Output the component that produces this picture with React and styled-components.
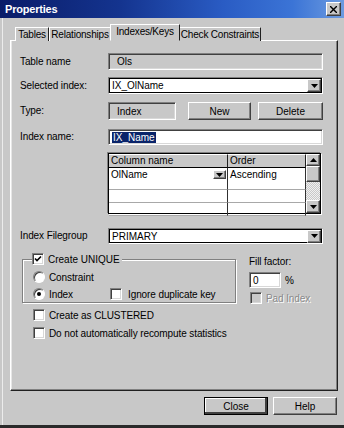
import React from "react";
import styled, { createGlobalStyle, css } from "styled-components";

const GlobalStyle = createGlobalStyle`
  html, body {
    margin: 0;
    padding: 0;
    background: #c8c8c8;
  }
  body {
    font-family: "Liberation Sans", Arial, sans-serif;
    font-size: 10px;
    color: #000;
  }
`;

const raised = css`
  border-top: 1px solid #fff;
  border-left: 1px solid #fff;
  border-right: 1px solid #404040;
  border-bottom: 1px solid #404040;
  box-shadow: inset -1px -1px 0 #808080;
`;

const sunken = css`
  border-top: 1px solid #808080;
  border-left: 1px solid #808080;
  border-right: 1px solid #fff;
  border-bottom: 1px solid #fff;
  box-shadow: inset 1px 1px 0 #404040, inset -1px -1px 0 #d8d8d8;
`;

const Window = styled.div`
  width: 344px;
  height: 428px;
  box-sizing: border-box;
  background: #c8c8c8;
  border-bottom: 3px solid #2a2a2a;
  display: flex;
  flex-direction: column;
  box-shadow: inset 2px 0 0 #c8c8c8, inset 3px 0 0 #ececec;
`;

const TitleBar = styled.div`
  height: 18px;
  background: linear-gradient(90deg, #0a1c68 0%, #14348f 35%, #2a5cc4 65%, #3b74d6 85%, #6c9be0 100%);
  display: flex;
  align-items: center;
  justify-content: space-between;
  padding: 0 3px 0 5px;
`;

const Title = styled.span`
  color: #fff;
  font-weight: bold;
  font-size: 11px;
  letter-spacing: -0.2px;
`;

const CloseBtn = styled.div`
  width: 13px;
  height: 12px;
  background: #c8c8c8;
  ${raised};
  display: flex;
  align-items: center;
  justify-content: center;
`;

const TabStrip = styled.div`
  display: flex;
  align-items: flex-end;
  height: 17px;
  margin-top: 6px;
  padding-left: 15px;
  position: relative;
  z-index: 1;
  margin-bottom: -1px;
`;

const Tab = styled.div`
  box-sizing: border-box;
  width: ${(p) => p.$w}px;
  height: ${(p) => (p.$active ? 17 : 14)}px;
  background: #c8c8c8;
  border-top: 1px solid #fff;
  border-left: 1px solid #fff;
  border-right: 1px solid #202020;
  border-bottom: ${(p) => (p.$active ? "1px solid #c8c8c8" : "none")};
  display: flex;
  align-items: center;
  justify-content: center;
  padding-bottom: ${(p) => (p.$active ? 2 : 0)}px;
  margin: 0 ${(p) => (p.$active ? -1 : 0)}px;
  position: relative;
  z-index: ${(p) => (p.$active ? 2 : 1)};
  letter-spacing: -0.2px;
  white-space: nowrap;
`;

const Panel = styled.div`
  margin: 0 6px 0 10px;
  height: 351px;
  box-sizing: border-box;
  border-top: 1px solid #fff;
  border-left: 1px solid #fff;
  border-right: 1px solid #202020;
  border-bottom: 1px solid #202020;
  box-shadow: inset -1px -1px 0 #808080, inset 1px 0 0 #e6e6e6;
  padding: 0 14px 0 9px;
  display: flex;
  flex-direction: column;
`;

const Row = styled.div`
  display: grid;
  grid-template-columns: 88px 215px;
  align-items: center;
  margin-top: ${(p) => p.$mt}px;
`;

const Label = styled.span`
  white-space: nowrap;
  letter-spacing: -0.1px;
  line-height: 12px;
`;

const Field = styled.div`
  box-sizing: border-box;
  height: ${(p) => p.$h || 17}px;
  width: ${(p) => (p.$w ? `${p.$w}px` : "100%")};
  background: ${(p) => (p.$disabled ? "#c8c8c8" : "#fff")};
  ${sunken};
  display: flex;
  align-items: center;
  padding-left: ${(p) => (p.$disabled ? 8 : 3)}px;
  justify-content: space-between;
  white-space: nowrap;
`;

const FocusField = styled(Field)`
  box-shadow: inset 1px 1px 0 #000, inset -1px -1px 0 #000;
`;

const DropBtn = styled.div`
  width: 14px;
  height: 13px;
  margin-right: 1px;
  box-sizing: border-box;
  background: #c8c8c8;
  ${raised};
  display: flex;
  align-items: center;
  justify-content: center;
`;

const Arrow = ({ up }) => (
  <svg width="7" height="4" viewBox="0 0 7 4">
    <path d={up ? "M3.5 0L7 4H0z" : "M0 0h7L3.5 4z"} fill="#000" />
  </svg>
);

const Highlight = styled.span`
  background: #0a246a;
  color: #fff;
  padding: 0 1px;
`;

const TypeCell = styled.div`
  display: flex;
  align-items: center;
`;

const Button = styled.button`
  box-sizing: border-box;
  width: ${(p) => p.$w}px;
  height: 18px;
  margin-left: ${(p) => p.$ml || 0}px;
  background: #c8c8c8;
  font-family: inherit;
  font-size: 10px;
  color: #000;
  padding: 0;
  ${raised};
  ${(p) =>
    p.$default &&
    css`
      outline: 1px solid #000;
      outline-offset: -1px;
      box-shadow: inset -2px -2px 0 #404040, inset 1px 1px 0 #fff;
    `}
`;

const GridBox = styled.div`
  width: 213px;
  height: 61px;
  box-sizing: border-box;
  border: 1px solid #000;
  box-shadow: -1px -1px 0 #808080, 1px 1px 0 #fff;
  display: flex;
  background: #fff;
  margin-top: ${(p) => p.$mt}px;
  margin-left: 88px;
`;

const Table = styled.div`
  flex: 1;
  display: grid;
  grid-template-columns: 119px 1fr;
  grid-auto-rows: min-content;
`;

const HeadCell = styled.div`
  height: 12px;
  background: #c8c8c8;
  border-bottom: 1px solid #000;
  border-right: 1px solid #202020;
  border-top: 1px solid #fff;
  padding-left: 2px;
  display: flex;
  align-items: center;
  line-height: 10px;
`;

const Cell = styled.div`
  height: ${(p) => p.$h}px;
  border-right: 1px solid #303030;
  border-bottom: 1px solid #a8a8a8;
  padding: 1px 1px 0 2px;
  box-sizing: border-box;
  display: flex;
  align-items: flex-start;
  justify-content: space-between;
  line-height: 12px;
`;

const MiniDrop = styled.div`
  width: 13px;
  height: 9px;
  margin-top: 1px;
  box-sizing: border-box;
  background: #c8c8c8;
  ${raised};
  display: flex;
  align-items: center;
  justify-content: center;
`;

const ScrollBar = styled.div`
  width: 14px;
  display: flex;
  flex-direction: column;
  background-color: #e4e4e4;
  background-image: repeating-conic-gradient(#c8c8c8 0% 25%, #f0f0f0 0% 50%);
  background-size: 2px 2px;
`;

const ScrollBtn = styled.div`
  height: ${(p) => p.$h}px;
  box-sizing: border-box;
  background: #c8c8c8;
  ${raised};
  display: flex;
  align-items: center;
  justify-content: center;
  margin-top: ${(p) => (p.$push ? "auto" : "0")};
`;

const Lower = styled.div`
  display: flex;
  align-items: flex-start;
  margin-top: 9px;
`;

const Group = styled.fieldset`
  margin: 0 0 0 2px;
  width: 214px;
  box-sizing: border-box;
  height: 50px;
  padding: 0 0 0 9px;
  border: 1px solid #808080;
  box-shadow: inset 1px 1px 0 #fff, 1px 1px 0 #fff;
  display: flex;
  flex-direction: column;
`;

const Legend = styled.legend`
  padding: 0 2px 0 0;
  display: flex;
  align-items: center;
  gap: 4px;
  height: 12px;
  background: #c8c8c8;
`;

const Option = styled.label`
  display: flex;
  align-items: center;
  gap: ${(p) => p.$gap || 4}px;
  height: 12px;
  white-space: nowrap;
  color: ${(p) => (p.$disabled ? "#8a8a8a" : "#000")};
  text-shadow: ${(p) => (p.$disabled ? "1px 1px 0 #fff" : "none")};
  margin-top: ${(p) => p.$mt || 0}px;
  margin-left: ${(p) => p.$ml || 0}px;
  letter-spacing: -0.1px;
`;

const OptionRow = styled.div`
  display: grid;
  grid-template-columns: 78px auto;
  margin-top: 5px;
`;

const Box = styled.span`
  width: 12px;
  height: 12px;
  flex: none;
  box-sizing: border-box;
  background: ${(p) => (p.$disabled ? "#c8c8c8" : "#fff")};
  ${sunken};
  display: flex;
  align-items: center;
  justify-content: center;
`;

const Radio = styled.span`
  width: 12px;
  height: 12px;
  flex: none;
  box-sizing: border-box;
  border-radius: 50%;
  background: #fff;
  border: 1px solid;
  border-color: #808080 #fff #fff #808080;
  box-shadow: inset 1px 1px 0 #404040;
  display: flex;
  align-items: center;
  justify-content: center;
  &::after {
    content: "";
    width: 4px;
    height: 4px;
    border-radius: 50%;
    background: ${(p) => (p.$on ? "#000" : "transparent")};
  }
`;

const Check = () => (
  <svg width="8" height="8" viewBox="0 0 8 8">
    <path d="M1 3.5l2 2L7 1.5" stroke="#000" strokeWidth="1.6" fill="none" />
  </svg>
);

const FillCol = styled.div`
  margin-left: 13px;
  padding-top: 3px;
  display: flex;
  flex-direction: column;
`;

const FillRow = styled.div`
  display: flex;
  align-items: center;
  gap: 4px;
  margin-top: 4px;
`;

const Footer = styled.div`
  display: flex;
  justify-content: flex-end;
  gap: 5px;
  padding-right: 7px;
  margin-top: 6px;
`;

export default function App() {
  return (
    <>
      <GlobalStyle />
      <Window>
        <TitleBar>
          <Title>Properties</Title>
          <CloseBtn>
            <svg width="7" height="7" viewBox="0 0 7 7">
              <path d="M0 0L7 7M7 0L0 7" stroke="#000" strokeWidth="1.4" />
            </svg>
          </CloseBtn>
        </TitleBar>
        <TabStrip>
          <Tab $w={34}>Tables</Tab>
          <Tab $w={62}>Relationships</Tab>
          <Tab $w={70} $active>Indexes/Keys</Tab>
          <Tab $w={82}>Check Constraints</Tab>
        </TabStrip>
        <Panel>
          <Row $mt={12}>
            <Label>Table name</Label>
            <Field $disabled>Ols</Field>
          </Row>
          <Row $mt={7}>
            <Label>Selected index:</Label>
            <FocusField>
              IX_OlName
              <DropBtn>
                <Arrow />
              </DropBtn>
            </FocusField>
          </Row>
          <Row $mt={8}>
            <Label>Type:</Label>
            <TypeCell>
              <Field $disabled $w={68} $h={18}>
                Index
              </Field>
              <Button $w={63} $ml={12}>New</Button>
              <Button $w={65} $ml={7}>Delete</Button>
            </TypeCell>
          </Row>
          <Row $mt={9}>
            <Label>Index name:</Label>
            <Field $h={16}>
              <Highlight>IX_Name</Highlight>
            </Field>
          </Row>
          <GridBox $mt={8}>
            <Table>
              <HeadCell>Column name</HeadCell>
              <HeadCell>Order</HeadCell>
              <Cell $h={22}>
                OlName
                <MiniDrop>
                  <Arrow />
                </MiniDrop>
              </Cell>
              <Cell $h={22}>Ascending</Cell>
              <Cell $h={13} />
              <Cell $h={13} />
              <Cell $h={13} />
              <Cell $h={13} />
            </Table>
            <ScrollBar>
              <ScrollBtn $h={12}>
                <Arrow up />
              </ScrollBtn>
              <ScrollBtn $h={16} />
              <ScrollBtn $h={13} $push>
                <Arrow />
              </ScrollBtn>
            </ScrollBar>
          </GridBox>
          <Row $mt={14}>
            <Label>Index Filegroup</Label>
            <FocusField $h={16}>
              PRIMARY
              <DropBtn>
                <Arrow />
              </DropBtn>
            </FocusField>
          </Row>
          <Lower>
            <Group>
              <Legend>
                <Box>
                  <Check />
                </Box>
                Create UNIQUE
              </Legend>
              <Option $mt={6} $ml={1}>
                <Radio />
                Constraint
              </Option>
              <OptionRow>
                <Option $ml={1}>
                  <Radio $on />
                  Index
                </Option>
                <Option $gap={6}>
                  <Box />
                  Ignore duplicate key
                </Option>
              </OptionRow>
            </Group>
            <FillCol>
              <Label>Fill factor:</Label>
              <FillRow>
                <Field $w={32} $h={16}>0</Field>
                <span>%</span>
              </FillRow>
              <Option $mt={4} $ml={1} $disabled>
                <Box $disabled />
                Pad Index
              </Option>
            </FillCol>
          </Lower>
          <Option $mt={5} $ml={13}>
            <Box />
            Create as CLUSTERED
          </Option>
          <Option $mt={6} $ml={13}>
            <Box />
            Do not automatically recompute statistics
          </Option>
        </Panel>
        <Footer>
          <Button $w={64} $default>Close</Button>
          <Button $w={64}>Help</Button>
        </Footer>
      </Window>
    </>
  );
}
